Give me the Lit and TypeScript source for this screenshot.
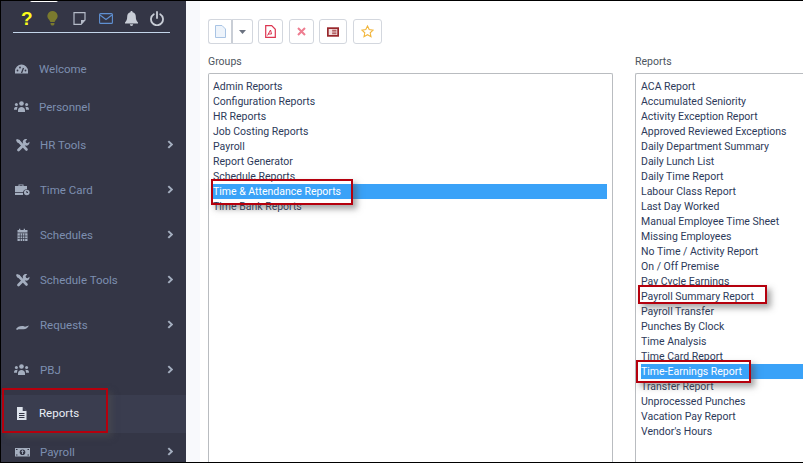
import { LitElement, html, css, svg } from "lit";
import { customElement } from "lit/decorators.js";

const groups = ["Admin Reports","Configuration Reports","HR Reports","Job Costing Reports","Payroll","Report Generator","Schedule Reports","Time & Attendance Reports","Time Bank Reports"];
const reports = ["ACA Report","Accumulated Seniority","Activity Exception Report","Approved Reviewed Exceptions","Daily Department Summary","Daily Lunch List","Daily Time Report","Labour Class Report","Last Day Worked","Manual Employee Time Sheet","Missing Employees","No Time / Activity Report","On / Off Premise","Pay Cycle Earnings","Payroll Summary Report","Payroll Transfer","Punches By Clock","Time Analysis","Time Card Report","Time-Earnings Report","Transfer Report","Unprocessed Punches","Vacation Pay Report","Vendor's Hours"];

const ic = {
  gauge: svg`<path d="M1 13.500V11a6.500 6.500 0 0 1 13 0v2.500z" fill="currentColor" transform="translate(0 -1)"/><path d="M7.500 12 9.500 7" stroke="#343646" stroke-width="1.300"/><circle cx="3.500" cy="9.500" r=".9" fill="#343646"/><circle cx="6" cy="6.500" r=".9" fill="#343646"/><circle cx="11.500" cy="9.500" r=".9" fill="#343646"/>`,
  users: svg`<g fill="currentColor"><circle cx="7.500" cy="4.500" r="2.300"/><circle cx="2.400" cy="5.500" r="1.500"/><circle cx="12.600" cy="5.500" r="1.500"/><path d="M4 13v-1.800C4 9.300 5.500 8 7.500 8S11 9.300 11 11.200V13z"/><path d="M0 10.500C0 8.500 1 7.800 3.600 7.800 3.200 8.800 3 9.800 3 10.800H0zM15 10.500C15 8.500 14 7.800 11.400 7.800c.4 1 .6 2 .6 3h3z"/></g>`,
  tools: svg`<g fill="none" stroke="currentColor" stroke-linecap="round"><path d="M4.500 13 11 6.500" stroke-width="2.800"/><path d="M5 4.500 12.500 12.500" stroke-width="2.600"/></g><path fill="currentColor" d="M10.500 2.200a3.200 3.200 0 0 0-1.200 4.400l2.100 2a3.200 3.200 0 0 0 4-3.800l-1.800 1.500-1.700-.6-.3-1.800 1.600-1.500c-1-.5-1.900-.5-2.700-.2z"/><path fill="currentColor" d="M3 2 2 3l1.200 2.500 1.800.4L6.300 4.600 5.800 3z"/>`,
  card: svg`<g fill="currentColor"><path d="M4.500 4V2.500h5V4h3.500v3.200a3.800 3.800 0 0 0-3.900 2.800H1V4zm1 0h3v-.7h-3z" fill-rule="evenodd"/><path d="M1 10.800h8V13H1z"/><circle cx="12.800" cy="10.500" r="2.800"/></g><path d="M12.800 9v1.500h1.200" stroke="#343646" fill="none"/>`,
  cal: svg`<path fill="currentColor" d="M3.500 3h1.500V1.800h1.300V3h3.400V1.800H11V3h2.500v2.500h-10zM3.500 6.300h10V14h-10z"/><path stroke="#343646" stroke-width=".7" d="M3.500 9h10M3.500 11.500h10M6.300 6.300V14M8.500 6.300V14M10.700 6.300V14"/>`,
  hand: svg`<path fill="currentColor" d="M2 12c1.500-2 3-3 6-3 1.500 0 2.500.4 3 .8l4-1.300c-1.200 2-3 3.800-5.500 3.800H4.500L3 13z"/>`,
  file: svg`<path fill="currentColor" d="M3 2h5.500L12.500 6v9H3zM8.700 2.200V6h3.600z"/><path stroke="#343646" stroke-width="1.100" d="M5 8.500h5.500M5 10.500h5.500M5 12.500h5.500"/>`,
  money: svg`<path fill="currentColor" d="M1 4h15v8.500H1z"/><circle cx="8.500" cy="8.200" r="2.800" fill="#343646"/><path d="M8.500 6.500v3.500M7.300 7.800 8.500 6.600l1.200 1.200" stroke="currentColor" fill="none" stroke-width=".9"/><path d="M2 5.500h1.500M13.500 5.500H15M2 11h1.500M13.500 11H15" stroke="#343646"/>`,
  chev: svg`<path d="M1 1l3.200 3-3.200 3" fill="none" stroke="currentColor" stroke-width="1.800"/>`,
};

const nav: [string, any, boolean, string][] = [
  ["Welcome", ic.gauge, false, "h38"],
  ["Personnel", ic.users, false, "h38"],
  ["HR Tools", ic.tools, true, "h38 gap"],
  ["Time Card", ic.card, true, "h45"],
  ["Schedules", ic.cal, true, "h45"],
  ["Schedule Tools", ic.tools, true, "h45"],
  ["Requests", ic.hand, true, "h45"],
  ["PBJ", ic.users, true, "h45"],
  ["Reports", ic.file, false, "active"],
  ["Payroll", ic.money, true, "h38"],
];

@customElement("app-root")
export class AppRoot extends LitElement {
  static styles = css`
    :host { display: block; width: 803px; height: 463px; overflow: hidden; position: relative; font-family: Roboto, "Liberation Sans", sans-serif; background: #f8f9fc; }
    * { box-sizing: border-box; }
    .frame { display: flex; width: 803px; height: 463px; border-top: 1px solid #000; border-left: 1px solid #000; border-bottom: 1px solid #000; overflow: hidden; }
    .side { width: 185px; flex: none; background: #343646; color: #7d8fb0; height: 100%; display: flex; flex-direction: column; overflow: hidden; }
    .tops { margin-left: 12px; width: 157px; height: 32px; flex: none; border-bottom: 1px solid #c4d6ea; display: flex; align-items: center; padding: 4px 0 0 8px; gap: 12px; position: relative; }
    .notch { position: absolute; left: 17px; top: -1px; width: 28px; height: 2px; background: #fff; border-radius: 0 0 3px 3px; }
    .tops svg { display: block; flex: none; }
    .tops .wide-gap { margin-left: 3px; }
    .tops .mid-gap { margin-left: 1px; }
    .q { font: 900 19px/20px "Liberation Sans", sans-serif; color: #fbfb1c; width: 11px; flex: none; }
    nav { margin-top: 17px; display: flex; flex-direction: column; flex: none; }
    .item { display: flex; align-items: center; font-size: 11.500px; padding-left: 13px; position: relative; flex: none; }
    .h38 { height: 38px; }
    .h45 { height: 45px; }
    .gap { margin-bottom: 3px; }
    .active { height: 38px; margin-top: 3px; padding-bottom: 2px; background: #3a3d4f; color: #e9eef6; }
    .ico { width: 16px; height: 16px; margin-right: 9px; color: #a4aebf; flex: none; }
    .ico.more { margin-right: 10px; }
    .active .ico { color: #dde3ec; }
    .chev { position: absolute; left: 166px; top: 50%; margin-top: -5px; width: 6px; height: 9px; color: #a4aebf; }
    main { flex: 1; min-width: 0; padding-left: 8px; margin-left: 14px; display: flex; flex-direction: column; background: #fff; }
    .bar { display: flex; gap: 6px; margin-top: 18px; height: 25px; flex: none; }
    .btn { height: 25px; width: 25px; border: 1px solid #d3d7de; border-radius: 3px; background: #fff; display: flex; align-items: center; justify-content: center; flex: none; }
    .btn.main { border-radius: 3px 0 0 3px; border-right-width: 2px; border-right-color: #c9ced6; }
    .btn.caret { width: 20px; margin-left: -6px; border-left: 0; border-radius: 0 3px 3px 0; margin-right: -1px; }
    .btn.wide { width: 28px; margin-left: -1px; }
    .btn.wider { width: 29px; }
    .cols { display: flex; gap: 22px; margin-top: 10px; }
    .col { flex: none; }
    .col.g { width: 405px; }
    .col.r { width: 170px; }
    .lab { font-size: 10.500px; line-height: 13px; color: #4d5560; height: 19px; padding-top: 1px; }
    .box { border: 1px solid #b9bcc0; border-bottom: 0; border-radius: 2px 2px 0 0; padding: 5px 5px 0 4px; height: 400px; background: #fff; }
    .r .box { border-right: 0; padding-right: 0; padding-left: 5px; }
    .opt { font-size: 10.500px; line-height: 15px; height: 15px; color: #2d3a5a; white-space: nowrap; }
    .opt.sel { background: #3aa2f8; color: #fff; }
    .call { position: absolute; border: 2px solid #b5000d; box-shadow: 4px 4px 6px rgba(80,80,80,.5); }
    .c1 { left: 211px; top: 179px; width: 142px; height: 26px; }
    .c2 { left: 638px; top: 285px; width: 129px; height: 19px; }
    .c3 { left: 636px; top: 360px; width: 115px; height: 23px; }
    .c4 { left: 2px; top: 388px; width: 106px; height: 45px; }
  `;
  render() {
    return html`
      <div class="frame">
        <aside class="side">
          <div class="tops">
            <div class="notch"></div>
            <span class="q">?</span>
            <svg class="wide-gap" width="11" height="15" viewBox="0 0 12 17"><path fill="#7a7a2e" d="M6 0a5.800 5.800 0 0 0-3.500 10.400c.7.700 1 1.500 1 2.100h5c0-.6.300-1.400 1-2.100A5.800 5.800 0 0 0 6 0zM3.800 13.500h4.400V15L7 16.500H5L3.800 15z"/></svg>
            <svg class="wide-gap" width="13" height="13" viewBox="0 0 13 13"><path fill="none" stroke="#b5bbc8" stroke-width="1.200" d="M1 .7h11V8L8 12.300H1z"/><path fill="#b5bbc8" d="M8 8h4l-4 4.500z"/></svg>
            <svg class="mid-gap" width="14" height="11" viewBox="0 0 14 11"><rect x=".6" y=".6" width="12.800" height="9.800" rx="1" fill="none" stroke="#5f90d2" stroke-width="1.100"/><path d="M1 2l6 4.500L13 2" fill="none" stroke="#5f90d2" stroke-width="1.100"/></svg>
            <svg width="13" height="15" viewBox="0 0 13 15"><path fill="#c8cdd6" d="M6.500 0c.7 0 1.100.5 1.100 1.200C9.700 1.700 10.800 3.300 10.800 5.500c0 3 .7 4.500 2.200 6v1H0v-1c1.500-1.500 2.200-3 2.200-6 0-2.200 1.100-3.800 3.200-4.300C5.400.5 5.800 0 6.500 0zM4.800 13.300h3.400a1.700 1.700 0 0 1-3.400 0z"/></svg>
            <svg width="14" height="15" viewBox="0 0 14 15"><path fill="none" stroke="#c8cdd6" stroke-width="1.800" stroke-linecap="round" d="M7 1v6M3.800 3.200a6 6 0 1 0 6.400 0"/></svg>
          </div>
          <nav>
            ${nav.map(([t, i, c, k]) => html`
              <div class="item ${k}">
                <svg class="ico ${c ? "more" : ""}" viewBox="0 0 16 16">${i}</svg>
                <span>${t}</span>
                ${c ? html`<svg class="chev" viewBox="0 0 5 8">${ic.chev}</svg>` : ""}
              </div>`)}
          </nav>
        </aside>
        <main>
          <div class="bar">
            <div class="btn main"><svg width="11" height="13" viewBox="0 0 11 13"><path d="M.5.500h6.500l3.500 3.500v8.500H.5z" fill="#eef4fb" stroke="#a9c4e4"/></svg></div>
            <div class="btn caret"><svg width="7" height="4" viewBox="0 0 7 4"><path d="M0 0h7L3.500 4z" fill="#6b7280"/></svg></div>
            <div class="btn"><svg width="11" height="13" viewBox="0 0 11 13"><path d="M.7.700h6l3.600 3.600v8H.7z" fill="#fff" stroke="#dc3550" stroke-width="1.200"/><path d="M2.500 10.500 5.500 5l1 4H3" fill="none" stroke="#dc3550"/></svg></div>
            <div class="btn"><svg width="9" height="9" viewBox="0 0 9 9"><path d="M1 1l7 7M8 1 1 8" stroke="#ee7d90" stroke-width="2"/></svg></div>
            <div class="btn wide"><svg width="12" height="10" viewBox="0 0 14 11"><rect width="14" height="11" fill="#98282c"/><rect x="2" y="2" width="10" height="7" fill="#f2dede"/><path d="M6 3.500h5M6 5.500h5M6 7.500h5" stroke="#98282c"/></svg></div>
            <div class="btn wider"><svg width="13" height="13" viewBox="0 0 13 13"><path d="M6.500 1l1.700 3.600 3.900.5-2.900 2.700.8 3.900-3.500-2-3.500 2 .8-3.900L.9 5.100l3.900-.5z" fill="#fff" stroke="#f2b63c" stroke-width="1.100"/></svg></div>
          </div>
          <div class="cols">
            <section class="col g">
              <div class="lab">Groups</div>
              <div class="box">${groups.map((g) => html`<div class="opt ${g.startsWith("Time &") ? "sel" : ""}">${g}</div>`)}</div>
            </section>
            <section class="col r">
              <div class="lab">Reports</div>
              <div class="box">${reports.map((g) => html`<div class="opt ${g === "Time-Earnings Report" ? "sel" : ""}">${g}</div>`)}</div>
            </section>
          </div>
        </main>
      </div>
      <div class="call c1"></div>
      <div class="call c2"></div>
      <div class="call c3"></div>
      <div class="call c4"></div>
    `;
  }
}
